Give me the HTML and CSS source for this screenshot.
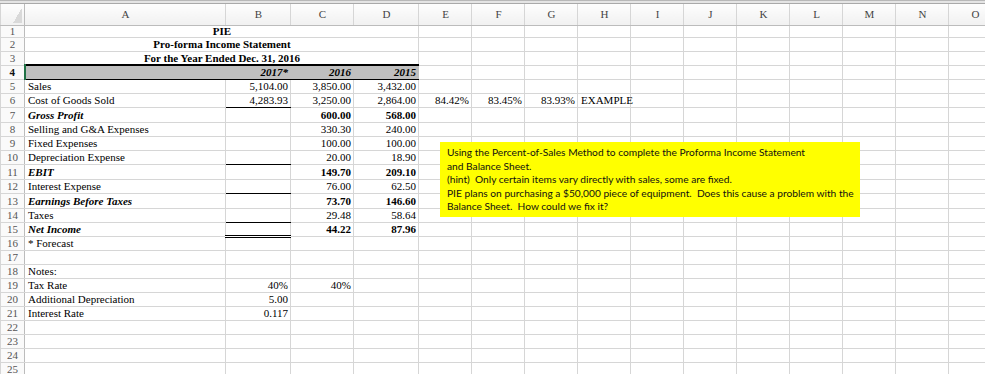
FILE: index.html
```html
<!DOCTYPE html>
<html lang="en">
<head>
    <meta charset="UTF-8">
    <meta name="viewport" content="width=device-width, initial-scale=1.0">
    <title>PIE Pro-forma Income Statement</title>
    <link rel="stylesheet" href="styles.css">
</head>
<body>
    <div class="window-edge"></div>

    <div class="sheet">
        <table class="grid">
            <colgroup>
                <col class="col-rownum">
                <col class="col-a">
                <col class="col-b">
                <col class="col-c">
                <col class="col-d">
                <col span="11" class="col-std">
            </colgroup>
            <thead>
                <tr class="col-heads">
                    <th class="corner"></th>
                    <th>A</th><th>B</th><th>C</th><th>D</th><th>E</th><th>F</th><th>G</th><th>H</th>
                    <th>I</th><th>J</th><th>K</th><th>L</th><th>M</th><th>N</th><th>O</th>
                </tr>
            </thead>
            <tbody>
                <tr class="row-first">
                    <th>1</th>
                    <td colspan="4" class="title">PIE</td>
                    <td></td><td></td><td></td><td></td><td></td><td></td><td></td><td></td><td></td><td></td><td></td>
                </tr>
                <tr>
                    <th>2</th>
                    <td colspan="4" class="title">Pro-forma Income Statement</td>
                    <td></td><td></td><td></td><td></td><td></td><td></td><td></td><td></td><td></td><td></td><td></td>
                </tr>
                <tr>
                    <th>3</th>
                    <td colspan="4" class="title">For the Year Ended Dec. 31, 2016</td>
                    <td></td><td></td><td></td><td></td><td></td><td></td><td></td><td></td><td></td><td></td><td></td>
                </tr>
                <tr class="row-years">
                    <th class="active">4</th>
                    <td class="shade"></td>
                    <td class="shade num bi">2017*</td>
                    <td class="shade num bi">2016</td>
                    <td class="shade num bi">2015</td>
                    <td></td><td></td><td></td><td></td><td></td><td></td><td></td><td></td><td></td><td></td><td></td>
                </tr>
                <tr>
                    <th>5</th>
                    <td>Sales</td>
                    <td class="num">5,104.00</td>
                    <td class="num">3,850.00</td>
                    <td class="num">3,432.00</td>
                    <td></td><td></td><td></td><td></td><td></td><td></td><td></td><td></td><td></td><td></td><td></td>
                </tr>
                <tr>
                    <th>6</th>
                    <td>Cost of Goods Sold</td>
                    <td class="num rule">4,283.93</td>
                    <td class="num">3,250.00</td>
                    <td class="num">2,864.00</td>
                    <td class="num">84.42%</td>
                    <td class="num">83.45%</td>
                    <td class="num">83.93%</td>
                    <td class="spill">EXAMPLE</td>
                    <td></td><td></td><td></td><td></td><td></td><td></td><td></td>
                </tr>
                <tr class="row-tall">
                    <th>7</th>
                    <td class="bi">Gross Profit</td>
                    <td></td>
                    <td class="num b">600.00</td>
                    <td class="num b">568.00</td>
                    <td></td><td></td><td></td><td></td><td></td><td></td><td></td><td></td><td></td><td></td><td></td>
                </tr>
                <tr>
                    <th>8</th>
                    <td>Selling and G&amp;A Expenses</td>
                    <td></td>
                    <td class="num">330.30</td>
                    <td class="num">240.00</td>
                    <td></td><td></td><td></td><td></td><td></td><td></td><td></td><td></td><td></td><td></td><td></td>
                </tr>
                <tr>
                    <th>9</th>
                    <td>Fixed Expenses</td>
                    <td></td>
                    <td class="num">100.00</td>
                    <td class="num">100.00</td>
                    <td></td><td></td><td></td><td></td><td></td><td></td><td></td><td></td><td></td><td></td><td></td>
                </tr>
                <tr>
                    <th>10</th>
                    <td>Depreciation Expense</td>
                    <td class="rule"></td>
                    <td class="num">20.00</td>
                    <td class="num">18.90</td>
                    <td></td><td></td><td></td><td></td><td></td><td></td><td></td><td></td><td></td><td></td><td></td>
                </tr>
                <tr class="row-tall">
                    <th>11</th>
                    <td class="bi">EBIT</td>
                    <td></td>
                    <td class="num b">149.70</td>
                    <td class="num b">209.10</td>
                    <td></td><td></td><td></td><td></td><td></td><td></td><td></td><td></td><td></td><td></td><td></td>
                </tr>
                <tr>
                    <th>12</th>
                    <td>Interest Expense</td>
                    <td class="rule"></td>
                    <td class="num">76.00</td>
                    <td class="num">62.50</td>
                    <td></td><td></td><td></td><td></td><td></td><td></td><td></td><td></td><td></td><td></td><td></td>
                </tr>
                <tr class="row-tall">
                    <th>13</th>
                    <td class="bi">Earnings Before Taxes</td>
                    <td></td>
                    <td class="num b">73.70</td>
                    <td class="num b">146.60</td>
                    <td></td><td></td><td></td><td></td><td></td><td></td><td></td><td></td><td></td><td></td><td></td>
                </tr>
                <tr>
                    <th>14</th>
                    <td>Taxes</td>
                    <td class="rule"></td>
                    <td class="num">29.48</td>
                    <td class="num">58.64</td>
                    <td></td><td></td><td></td><td></td><td></td><td></td><td></td><td></td><td></td><td></td><td></td>
                </tr>
                <tr>
                    <th>15</th>
                    <td class="bi">Net Income</td>
                    <td class="rule-double"></td>
                    <td class="num b">44.22</td>
                    <td class="num b">87.96</td>
                    <td></td><td></td><td></td><td></td><td></td><td></td><td></td><td></td><td></td><td></td><td></td>
                </tr>
                <tr>
                    <th>16</th>
                    <td>* Forecast</td>
                    <td></td><td></td><td></td>
                    <td></td><td></td><td></td><td></td><td></td><td></td><td></td><td></td><td></td><td></td><td></td>
                </tr>
                <tr>
                    <th>17</th>
                    <td></td><td></td><td></td><td></td>
                    <td></td><td></td><td></td><td></td><td></td><td></td><td></td><td></td><td></td><td></td><td></td>
                </tr>
                <tr>
                    <th>18</th>
                    <td>Notes:</td>
                    <td></td><td></td><td></td>
                    <td></td><td></td><td></td><td></td><td></td><td></td><td></td><td></td><td></td><td></td><td></td>
                </tr>
                <tr>
                    <th>19</th>
                    <td>Tax Rate</td>
                    <td class="num">40%</td>
                    <td class="num">40%</td>
                    <td></td>
                    <td></td><td></td><td></td><td></td><td></td><td></td><td></td><td></td><td></td><td></td><td></td>
                </tr>
                <tr>
                    <th>20</th>
                    <td>Additional Depreciation</td>
                    <td class="num">5.00</td>
                    <td></td><td></td>
                    <td></td><td></td><td></td><td></td><td></td><td></td><td></td><td></td><td></td><td></td><td></td>
                </tr>
                <tr>
                    <th>21</th>
                    <td>Interest Rate</td>
                    <td class="num">0.117</td>
                    <td></td><td></td>
                    <td></td><td></td><td></td><td></td><td></td><td></td><td></td><td></td><td></td><td></td><td></td>
                </tr>
                <tr>
                    <th>22</th>
                    <td></td><td></td><td></td><td></td>
                    <td></td><td></td><td></td><td></td><td></td><td></td><td></td><td></td><td></td><td></td><td></td>
                </tr>
                <tr>
                    <th>23</th>
                    <td></td><td></td><td></td><td></td>
                    <td></td><td></td><td></td><td></td><td></td><td></td><td></td><td></td><td></td><td></td><td></td>
                </tr>
                <tr>
                    <th>24</th>
                    <td></td><td></td><td></td><td></td>
                    <td></td><td></td><td></td><td></td><td></td><td></td><td></td><td></td><td></td><td></td><td></td>
                </tr>
                <tr>
                    <th>25</th>
                    <td></td><td></td><td></td><td></td>
                    <td></td><td></td><td></td><td></td><td></td><td></td><td></td><td></td><td></td><td></td><td></td>
                </tr>
            </tbody>
        </table>

        <!-- text box floating over the sheet -->
        <div class="note-box">
            <div class="note-line">Using the Percent-of-Sales Method to complete the Proforma Income Statement</div>
            <div class="note-line">and Balance Sheet.</div>
            <div class="note-line">(hint)  Only certain items vary directly with sales, some are fixed.</div>
            <div class="note-line">PIE plans on purchasing a $50,000 piece of equipment.  Does this cause a problem with the</div>
            <div class="note-line">Balance Sheet.  How could we fix it?</div>
        </div>
    </div>
</body>
</html>
```

FILE: styles.css
```css
* {
    box-sizing: border-box;
}

body {
    margin: 0;
    background: #fff;
    overflow: hidden;
    font-family: "Liberation Serif", "Times New Roman", serif;
    font-size: 11px;
    color: #000;
}

.window-edge {
    height: 4px;
    background: #e4e4e4;
    border-top: 1px solid #b8b8b8;
    border-bottom: 1px solid #a9a9a9;
}

.sheet {
    position: relative;
}

.grid {
    border-collapse: collapse;
    table-layout: fixed;
    width: 1001px;
}

.col-rownum { width: 24px; }
.col-a { width: 201px; }
.col-b { width: 65px; }
.col-c { width: 63px; }
.col-d { width: 65px; }
.col-std { width: 53px; }

.grid th,
.grid td {
    height: 14px;
    padding: 0 2px 0 3px;
    border: 1px solid #d6d6d6;
    line-height: 12px;
    white-space: nowrap;
    font-weight: normal;
}

/* column letters */
.col-heads th {
    height: 21px;
    background: linear-gradient(#fdfdfd, #f1f1f1);
    border-top: none;
    border-bottom: 1px solid #bcbcbc;
    color: #444;
    font-size: 11px;
}

.col-heads th.corner {
    background: linear-gradient(to bottom right, transparent 50%, #d9d9d9 50%) no-repeat right 2px bottom 2px / 9px 15px,
                linear-gradient(#fdfdfd, #f1f1f1);
    border-right-color: #bcbcbc;
}

/* row numbers */
.grid tbody th {
    background: #fafafa;
    color: #555;
    text-align: center;
    padding: 0;
    border-right-color: #bcbcbc;
}

.grid tbody th.active {
    color: #111;
    font-weight: bold;
    border-right: 2px solid #207245;
}

.grid .row-first th,
.grid .row-first td {
    height: 12px;
    line-height: 11px;
}

.grid .row-tall th,
.grid .row-tall td {
    height: 15px;
}

.grid .title {
    text-align: center;
    font-weight: bold;
}

.grid .shade {
    background: #bfbfbf;
    border-top: 2px solid #000;
    border-bottom: 1px solid #000;
    border-right-color: #bfbfbf;
}

.grid .num {
    text-align: right;
}

.grid .b {
    font-weight: bold;
}

.grid .bi {
    font-weight: bold;
    font-style: italic;
}

.grid .rule {
    border-bottom: 1px solid #000;
}

.grid .rule-double {
    border-bottom: 3px double #000;
}

.grid .spill {
    overflow: visible;
}

.note-box {
    position: absolute;
    left: 440px;
    top: 138px;
    width: 420px;
    height: 75px;
    padding: 4px 7px;
    background: #ffff00;
    font-family: Lato, "Liberation Sans", sans-serif;
    font-size: 10.2px;
    line-height: 13.5px;
    color: #111;
}

.note-line {
    white-space: pre;
}
```
